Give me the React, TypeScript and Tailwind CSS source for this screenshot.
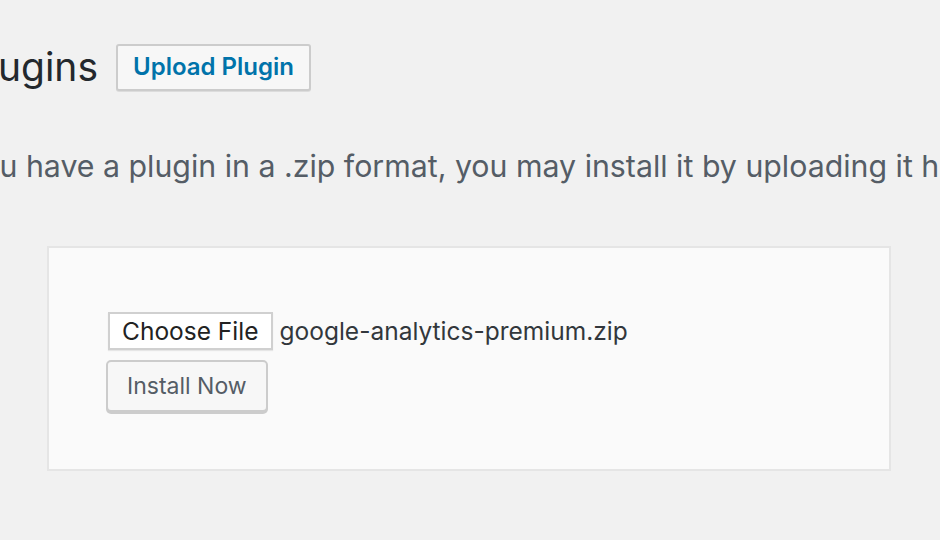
export default function App() {
  return (
    <div
      className="w-[940px] h-[540px] overflow-hidden bg-[#f1f1f1] text-[#23282d]"
      style={{ fontFamily: "Inter, Roboto, 'Liberation Sans', sans-serif" }}
    >
      {/* page title row */}
      <div className="flex items-center pt-[43px]">
        <h1 className="w-[98px] flex justify-end overflow-hidden whitespace-nowrap text-[39px] leading-[48px] font-normal text-[#23282d]">
          Add Plugins
        </h1>
        <button className="ml-[18px] h-[47px] px-[15px] border-2 border-[#cccccc] rounded-[3px] bg-[#f7f7f7] text-[24px] font-semibold text-[#0073aa] shadow-[0_1px_0_#dcdcdc]">
          Upload Plugin
        </button>
      </div>

      {/* help text */}
      <p className="mt-[55px] ml-[-63px] whitespace-nowrap text-[30.3px] leading-[40px] text-[#555d66]">
        If you have a plugin in a .zip format, you may install it by uploading it here.
      </p>

      {/* upload form */}
      <div className="ml-[47px] mt-[60px] w-[844px] h-[225px] border-2 border-[#e5e5e5] bg-[#fafafa] pl-[59px] pt-[64px]">
        <div className="flex items-center">
          <span className="h-[38px] px-[12px] flex items-center border-2 border-[#d0d0d0] bg-white text-[24.5px] text-[#222222] shadow-[0_1px_1px_rgba(0,0,0,0.08)]">
            Choose File
          </span>
          <span className="ml-[7px] text-[24.5px] text-[#32373c]">google-analytics-premium.zip</span>
        </div>
        <button className="mt-[10px] ml-[-2px] h-[52px] px-[19px] border-2 border-[#cccccc] rounded-[5px] bg-[#f7f7f7] text-[23px] text-[#555d66] shadow-[0_2px_0_#cccccc]">
          Install Now
        </button>
      </div>
    </div>
  );
}
